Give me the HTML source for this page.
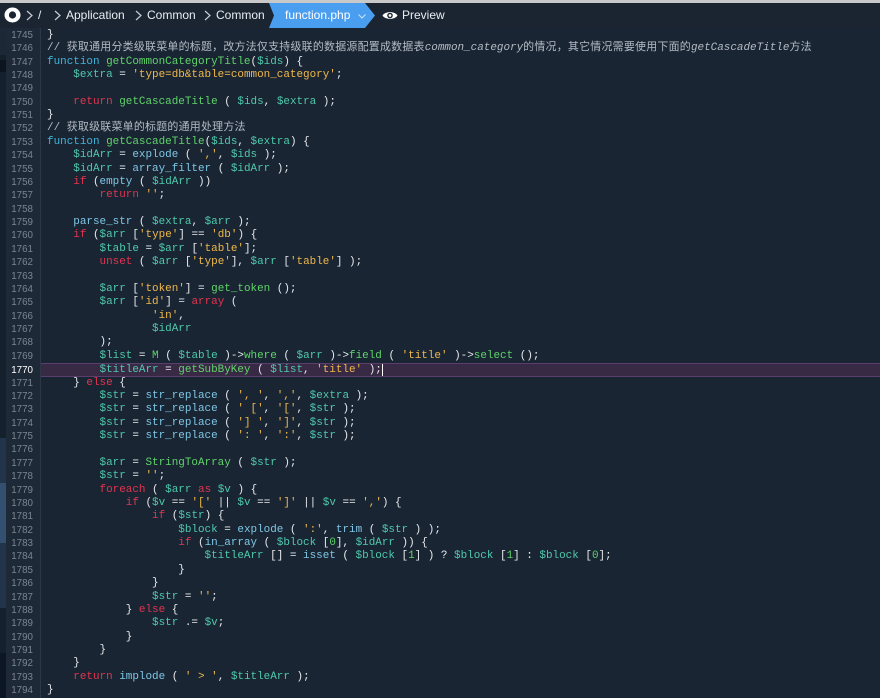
<!DOCTYPE html>
<html><head><meta charset="utf-8"><style>
*{margin:0;padding:0;box-sizing:border-box}
body{width:880px;height:698px;overflow:hidden;background:#1a2533;font-family:"Liberation Sans",sans-serif;position:relative}
#top{position:absolute;left:0;top:0;width:880px;height:3px;background:#c9c9c9}
#hdr{position:absolute;left:0;top:3px;width:880px;height:25px;background:#1b2431;color:#e8edf2;font-size:12px}
#hdr span{position:absolute;top:5px}
#tab{position:absolute;left:269px;top:0;width:106px;height:25px;background:#4a9ef0;clip-path:polygon(0 0,96px 0,106px 12.5px,96px 25px,0 25px,5px 12.5px)}
.chv{position:absolute;top:7px}
#strip{position:absolute;left:0;top:28px;width:6px;height:670px;background:#15202d}
#gut{position:absolute;left:6px;top:28px;width:35px;height:670px;background:#1e2937;border-right:1px solid #2c3846}
#code{position:absolute;left:0;top:28.8px;width:880px;font-family:"Liberation Mono","Noto Sans CJK SC",monospace;font-size:10.95px}
.l{height:13.38px;line-height:13.38px;white-space:pre;position:relative;color:#e6e9ec}
.l i.n{position:absolute;left:6px;width:27px;text-align:right;font-style:normal;color:#7b8591;font-size:9.8px;font-family:"Liberation Sans",sans-serif}
.l b{position:absolute;left:47px;font-weight:normal}
.hl{background:#382945;border-top:1px solid #5a3f6e;border-bottom:1px solid #5a3f6e;margin-left:41px}
.hl i.n{left:-35px;color:#fff}
.hl b{left:6px}
.k{color:#e2344f}.f{color:#3fb4da}.g{color:#5fd36a}.v{color:#4fc9ac}.s{color:#efb84c}.u{color:#7fc7e6}.c{color:#b3bbc4}.c em{font-style:italic}.d{color:#5fd36a}
.cj{letter-spacing:0.25px}
</style></head><body>
<div id="top"></div>
<div id="hdr">
<div id="tab"></div>
<svg style="position:absolute;left:4px;top:4px" width="17" height="16" viewBox="0 0 17 16"><ellipse cx="8.5" cy="8" rx="8" ry="7.5" fill="#fff"/><circle cx="8.5" cy="8" r="3.6" fill="#1b2431"/></svg>
<svg class="chv" style="left:26px" width="7" height="11" viewBox="0 0 7 11"><path d="M1 1l5 4.5L1 10" stroke="#c5ccd3" stroke-width="1.2" fill="none"/></svg>
<span style="left:38px">/</span>
<svg class="chv" style="left:54px" width="7" height="11" viewBox="0 0 7 11"><path d="M1 1l5 4.5L1 10" stroke="#c5ccd3" stroke-width="1.2" fill="none"/></svg>
<span style="left:66px">Application</span>
<svg class="chv" style="left:135px" width="7" height="11" viewBox="0 0 7 11"><path d="M1 1l5 4.5L1 10" stroke="#c5ccd3" stroke-width="1.2" fill="none"/></svg>
<span style="left:147px">Common</span>
<svg class="chv" style="left:204px" width="7" height="11" viewBox="0 0 7 11"><path d="M1 1l5 4.5L1 10" stroke="#c5ccd3" stroke-width="1.2" fill="none"/></svg>
<span style="left:216px">Common</span>
<span style="left:285px;color:#fff">function.php</span>
<svg style="position:absolute;left:358px;top:11px" width="8" height="5" viewBox="0 0 8 5"><path d="M0.5 0.5L4 4L7.5 0.5" stroke="#d0e4fa" fill="none"/></svg>
<svg style="position:absolute;left:382px;top:7px" width="16" height="11" viewBox="0 0 16 11"><path d="M0.5 5.5C3 1 13 1 15.5 5.5C13 10 3 10 0.5 5.5Z" fill="#fff"/><circle cx="8" cy="5.5" r="2.8" fill="#1b2431"/><circle cx="8" cy="5.5" r="1.4" fill="#fff"/></svg>
<span style="left:402px">Preview</span>
</div>
<div id="strip"><div style="position:absolute;top:0;height:27px;width:6px;background:#1c2836"></div><div style="position:absolute;top:32px;height:12px;width:6px;background:#0c1420"></div><div style="position:absolute;top:410px;height:170px;width:6px;background:#22344a"></div><div style="position:absolute;top:455px;height:60px;width:6px;background:#335070"></div><div style="position:absolute;top:625px;height:45px;width:6px;background:#0d1623"></div></div>
<div id="gut"></div>
<div id="code">
<div class="l"><i class="n">1745</i><b>}</b></div>
<div class="l"><i class="n">1746</i><b class="c">// <span class="cj">获取通用分类级联菜单的标题，改方法仅支持级联的数据源配置成数据表</span><em>common_category</em><span class="cj">的情况，其它情况需要使用下面的</span><em>getCascadeTitle</em><span class="cj">方法</span></b></div>
<div class="l"><i class="n">1747</i><b><span class="f">function</span> <span class="g">getCommonCategoryTitle</span>(<span class="v">$ids</span>) {</b></div>
<div class="l"><i class="n">1748</i><b>    <span class="v">$extra</span> = <span class="s">'type=db&amp;table=common_category'</span>;</b></div>
<div class="l"><i class="n">1749</i><b></b></div>
<div class="l"><i class="n">1750</i><b>    <span class="k">return</span> <span class="g">getCascadeTitle</span> ( <span class="v">$ids</span>, <span class="v">$extra</span> );</b></div>
<div class="l"><i class="n">1751</i><b>}</b></div>
<div class="l"><i class="n">1752</i><b class="c">// <span class="cj">获取级联菜单的标题的通用处理方法</span></b></div>
<div class="l"><i class="n">1753</i><b><span class="f">function</span> <span class="g">getCascadeTitle</span>(<span class="v">$ids</span>, <span class="v">$extra</span>) {</b></div>
<div class="l"><i class="n">1754</i><b>    <span class="v">$idArr</span> = <span class="u">explode</span> ( <span class="s">','</span>, <span class="v">$ids</span> );</b></div>
<div class="l"><i class="n">1755</i><b>    <span class="v">$idArr</span> = <span class="u">array_filter</span> ( <span class="v">$idArr</span> );</b></div>
<div class="l"><i class="n">1756</i><b>    <span class="k">if</span> (<span class="u">empty</span> ( <span class="v">$idArr</span> ))</b></div>
<div class="l"><i class="n">1757</i><b>        <span class="k">return</span> <span class="s">''</span>;</b></div>
<div class="l"><i class="n">1758</i><b></b></div>
<div class="l"><i class="n">1759</i><b>    <span class="u">parse_str</span> ( <span class="v">$extra</span>, <span class="v">$arr</span> );</b></div>
<div class="l"><i class="n">1760</i><b>    <span class="k">if</span> (<span class="v">$arr</span> [<span class="s">'type'</span>] == <span class="s">'db'</span>) {</b></div>
<div class="l"><i class="n">1761</i><b>        <span class="v">$table</span> = <span class="v">$arr</span> [<span class="s">'table'</span>];</b></div>
<div class="l"><i class="n">1762</i><b>        <span class="k">unset</span> ( <span class="v">$arr</span> [<span class="s">'type'</span>], <span class="v">$arr</span> [<span class="s">'table'</span>] );</b></div>
<div class="l"><i class="n">1763</i><b></b></div>
<div class="l"><i class="n">1764</i><b>        <span class="v">$arr</span> [<span class="s">'token'</span>] = <span class="g">get_token</span> ();</b></div>
<div class="l"><i class="n">1765</i><b>        <span class="v">$arr</span> [<span class="s">'id'</span>] = <span class="k">array</span> (</b></div>
<div class="l"><i class="n">1766</i><b>                <span class="s">'in'</span>,</b></div>
<div class="l"><i class="n">1767</i><b>                <span class="v">$idArr</span></b></div>
<div class="l"><i class="n">1768</i><b>        );</b></div>
<div class="l"><i class="n">1769</i><b>        <span class="v">$list</span> = <span class="g">M</span> ( <span class="v">$table</span> )-&gt;<span class="g">where</span> ( <span class="v">$arr</span> )-&gt;<span class="g">field</span> ( <span class="s">'title'</span> )-&gt;<span class="g">select</span> ();</b></div>
<div class="l hl"><i class="n">1770</i><b>        <span class="v">$titleArr</span> = <span class="g">getSubByKey</span> ( <span class="v">$list</span>, <span class="s">'title'</span> );<span style="border-left:1px solid #fff"></span></b></div>
<div class="l"><i class="n">1771</i><b>    } <span class="k">else</span> {</b></div>
<div class="l"><i class="n">1772</i><b>        <span class="v">$str</span> = <span class="u">str_replace</span> ( <span class="s">', '</span>, <span class="s">','</span>, <span class="v">$extra</span> );</b></div>
<div class="l"><i class="n">1773</i><b>        <span class="v">$str</span> = <span class="u">str_replace</span> ( <span class="s">' ['</span>, <span class="s">'['</span>, <span class="v">$str</span> );</b></div>
<div class="l"><i class="n">1774</i><b>        <span class="v">$str</span> = <span class="u">str_replace</span> ( <span class="s">'] '</span>, <span class="s">']'</span>, <span class="v">$str</span> );</b></div>
<div class="l"><i class="n">1775</i><b>        <span class="v">$str</span> = <span class="u">str_replace</span> ( <span class="s">': '</span>, <span class="s">':'</span>, <span class="v">$str</span> );</b></div>
<div class="l"><i class="n">1776</i><b></b></div>
<div class="l"><i class="n">1777</i><b>        <span class="v">$arr</span> = <span class="g">StringToArray</span> ( <span class="v">$str</span> );</b></div>
<div class="l"><i class="n">1778</i><b>        <span class="v">$str</span> = <span class="s">''</span>;</b></div>
<div class="l"><i class="n">1779</i><b>        <span class="k">foreach</span> ( <span class="v">$arr</span> <span class="k">as</span> <span class="v">$v</span> ) {</b></div>
<div class="l"><i class="n">1780</i><b>            <span class="k">if</span> (<span class="v">$v</span> == <span class="s">'['</span> || <span class="v">$v</span> == <span class="s">']'</span> || <span class="v">$v</span> == <span class="s">','</span>) {</b></div>
<div class="l"><i class="n">1781</i><b>                <span class="k">if</span> (<span class="v">$str</span>) {</b></div>
<div class="l"><i class="n">1782</i><b>                    <span class="v">$block</span> = <span class="u">explode</span> ( <span class="s">':'</span>, <span class="u">trim</span> ( <span class="v">$str</span> ) );</b></div>
<div class="l"><i class="n">1783</i><b>                    <span class="k">if</span> (<span class="u">in_array</span> ( <span class="v">$block</span> [<span class="d">0</span>], <span class="v">$idArr</span> )) {</b></div>
<div class="l"><i class="n">1784</i><b>                        <span class="v">$titleArr</span> [] = <span class="u">isset</span> ( <span class="v">$block</span> [<span class="d">1</span>] ) ? <span class="v">$block</span> [<span class="d">1</span>] : <span class="v">$block</span> [<span class="d">0</span>];</b></div>
<div class="l"><i class="n">1785</i><b>                    }</b></div>
<div class="l"><i class="n">1786</i><b>                }</b></div>
<div class="l"><i class="n">1787</i><b>                <span class="v">$str</span> = <span class="s">''</span>;</b></div>
<div class="l"><i class="n">1788</i><b>            } <span class="k">else</span> {</b></div>
<div class="l"><i class="n">1789</i><b>                <span class="v">$str</span> .= <span class="v">$v</span>;</b></div>
<div class="l"><i class="n">1790</i><b>            }</b></div>
<div class="l"><i class="n">1791</i><b>        }</b></div>
<div class="l"><i class="n">1792</i><b>    }</b></div>
<div class="l"><i class="n">1793</i><b>    <span class="k">return</span> <span class="u">implode</span> ( <span class="s">' &gt; '</span>, <span class="v">$titleArr</span> );</b></div>
<div class="l"><i class="n">1794</i><b>}</b></div>
</div>
</body></html>
